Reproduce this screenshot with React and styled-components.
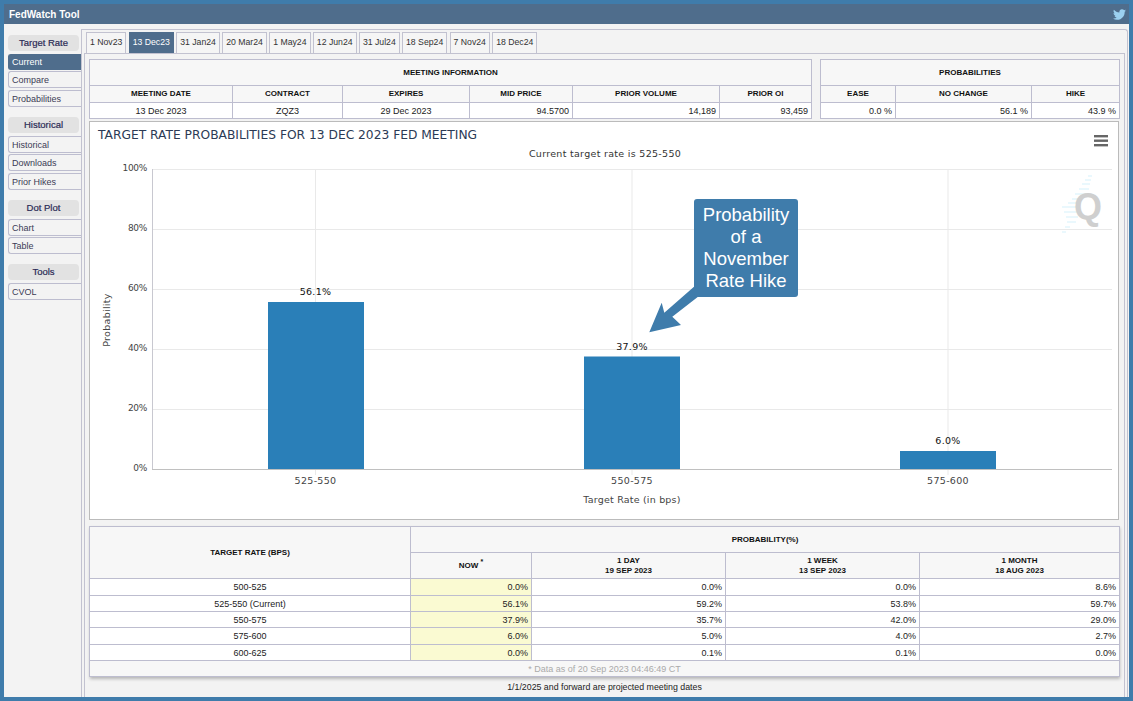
import styled, { createGlobalStyle } from 'styled-components'
import { FaTwitter } from 'react-icons/fa'

const GlobalStyle = createGlobalStyle`
  html, body {
    margin: 0;
    padding: 0;
    height: 100%;
    background: #3f7cab;
    font-family: "Liberation Sans", Arial, sans-serif;
    font-size: 9px;
    color: #222;
  }
`

const Shell = styled.div`
  box-sizing: border-box;
  height: 701px;
  padding: 4px;
`

const Window = styled.div`
  height: 693px;
  display: flex;
  flex-direction: column;
  background: #f3f3f3;
`

const Header = styled.header`
  flex: 0 0 20px;
  display: flex;
  align-items: center;
  justify-content: space-between;
  padding: 0 3px 0 5px;
  background: #4f6d8c;
  color: #fff;
  font-size: 10px;
  font-weight: bold;
  svg {
    color: #9bd0f0;
    font-size: 13px;
  }
`

const Body = styled.div`
  flex: 1;
  display: flex;
  padding-top: 5px;
  min-height: 0;
`

const Sidebar = styled.nav`
  flex: 0 0 76px;
  padding: 6px 0 0 4px;
  box-sizing: border-box;
  position: relative;
  z-index: 1;
`

const SideHeading = styled.div`
  width: 71px;
  height: 16px;
  margin: ${(p) => (p.$first ? '0' : '10px')} 0 3px;
  line-height: 15px;
  text-align: center;
  background: #e2e2e2;
  border-radius: 4px;
  font-size: 9.5px;
  -webkit-text-stroke: 0.2px #2a2a55;
  color: #2a2a55;
`

const SideItem = styled.div`
  box-sizing: border-box;
  width: 73px;
  height: ${(p) => (p.$active ? '16px' : '17px')};
  margin-bottom: ${(p) => (p.$active ? '1px' : '1.5px')};
  padding: ${(p) => (p.$active ? '1px' : '2px')} 0 0 3px;
  line-height: 13px;
  border-radius: 3px 0 0 3px;
  background: ${(p) => (p.$active ? '#4f6d8c' : '#f3f3f3')};
  color: ${(p) => (p.$active ? '#fff' : '#3b3b55')};
  border: 1px solid ${(p) => (p.$active ? '#4f6d8c' : '#bdbdcf')};
  border-right: 0;
`

const Frame = styled.div`
  flex: 1;
  display: flex;
  flex-direction: column;
  margin-right: 1px;
  min-width: 0;
  padding: 2px 2px 0;
  border: 1px solid #c2c2d0;
  border-bottom: 0;
  border-radius: 0 3px 0 0;
`

const Tabs = styled.div`
  flex: 0 0 21px;
  display: flex;
  gap: 2.3px;
  padding-left: 2px;
`

const Tab = styled.div`
  box-sizing: border-box;
  height: 21px;
  padding: 0 3px;
  line-height: 19px;
  font-size: 8.7px;
  white-space: nowrap;
  border: 1px solid ${(p) => (p.$active ? '#4f6d8c' : '#c2c2d0')};
  border-bottom: 0;
  background: ${(p) => (p.$active ? '#4f6d8c' : '#f5f5f5')};
  color: ${(p) => (p.$active ? '#fff' : '#333')};
`

const Panel = styled.div`
  flex: 1;
  box-sizing: border-box;
  display: flex;
  flex-direction: column;
  padding: 5px 0 0 4px;
  border: 1px solid #c2c2d0;
  border-bottom: 0;
`

const TopRow = styled.div`
  display: flex;
  justify-content: space-between;
  width: 1031px;
`

const Table = styled.table`
  table-layout: fixed;
  border-collapse: collapse;
  width: ${(p) => p.$w}px;
  background: #fff;
  font-size: 9px;
`

const Col = styled.col`
  width: ${(p) => p.$w}px;
`

const Th = styled.th`
  height: ${(p) => p.$h || 15}px;
  padding: 0 2px;
  border: 1px solid #bdbdcf;
  background: #f7f7f7;
  color: #111;
  font-size: 8px;
  font-weight: bold;
  line-height: 10px;
  text-align: center;
`

const Td = styled.td`
  height: ${(p) => p.$h || 15}px;
  padding: 0 3px;
  border: 1px solid #bdbdcf;
  background: ${(p) => (p.$now ? '#fafad2' : '#fff')};
  color: #222;
  line-height: 10px;
  text-align: ${(p) => (p.$center ? 'center' : 'right')};
`

const Foot = styled.td`
  height: 15px;
  padding: 0;
  border: 1px solid #bdbdcf;
  background: #f7f7f7;
  color: #aaa;
  text-align: center;
`

const ChartPanel = styled.div`
  position: relative;
  box-sizing: border-box;
  width: 1030px;
  height: 399px;
  margin-top: 2px;
  background: #fff;
  border: 1px solid #bbb;
`

const ChartSvg = styled.svg`
  display: block;
  font-family: "DejaVu Sans", sans-serif;
`

const Callout = styled.div`
  position: absolute;
  left: 604px;
  top: 77px;
  box-sizing: border-box;
  width: 104px;
  height: 98px;
  padding-top: 5px;
  border-radius: 3px;
  background: #3f7cab;
  color: #fff;
  font-size: 18.5px;
  line-height: 22px;
  text-align: center;
`

const RateTableWrap = styled.div`
  margin-top: 6px;
  box-shadow: 1px 2px 3px rgba(0, 0, 0, 0.25);
  width: 1030px;
`

const Note = styled.div`
  margin-top: 4px;
  padding-right: 4px;
  text-align: center;
  font-size: 8.8px;
  line-height: 12px;
  color: #222;
`

const Sup = styled.sup`
  font-size: 7px;
  line-height: 0;
`

const tabs = ['1 Nov23', '13 Dec23', '31 Jan24', '20 Mar24', '1 May24', '12 Jun24', '31 Jul24', '18 Sep24', '7 Nov24', '18 Dec24']

const sideGroups = [
  { title: 'Target Rate', items: ['Current', 'Compare', 'Probabilities'] },
  { title: 'Historical', items: ['Historical', 'Downloads', 'Prior Hikes'] },
  { title: 'Dot Plot', items: ['Chart', 'Table'] },
  { title: 'Tools', items: ['CVOL'] },
]

const rateRows = [
  { h: 16, cells: ['500-525', '0.0%', '0.0%', '0.0%', '8.6%'] },
  { h: 15, cells: ['525-550 (Current)', '56.1%', '59.2%', '53.8%', '59.7%'] },
  { h: 15, cells: ['550-575', '37.9%', '35.7%', '42.0%', '29.0%'] },
  { h: 16, cells: ['575-600', '6.0%', '5.0%', '4.0%', '2.7%'] },
  { h: 15, cells: ['600-625', '0.0%', '0.1%', '0.1%', '0.0%'] },
]

const yTicks = [
  [169, '100%'],
  [229, '80%'],
  [289, '60%'],
  [349, '40%'],
  [409, '20%'],
  [469, '0%'],
]

const bars = [
  { x: 268, top: 302, mid: 315.5, value: '56.1%', label: '525-550' },
  { x: 584, top: 356.5, mid: 632, value: '37.9%', label: '550-575' },
  { x: 900, top: 451, mid: 948, value: '6.0%', label: '575-600' },
]

function Chart() {
  return (
    <ChartSvg width="1028" height="397" viewBox="90 122 1028 397">
      <text x="98" y="139" fontSize="12.25" fill="#2b3a55">TARGET RATE PROBABILITIES FOR 13 DEC 2023 FED MEETING</text>
      <text x="605" y="157" fontSize="9.5" fill="#333" textAnchor="middle" letterSpacing="0.3">Current target rate is 525-550</text>
      <g fill="#666">
        <rect x="1094" y="135" width="14" height="2.4" />
        <rect x="1094" y="139.5" width="14" height="2.4" />
        <rect x="1094" y="144" width="14" height="2.4" />
      </g>
      {yTicks.slice(0, 5).map(([y]) => (
        <line key={y} x1="152" x2="1112" y1={y + 0.5} y2={y + 0.5} stroke="#e9e9e9" />
      ))}
      {bars.map((b) => (
        <line key={b.label} x1={b.mid} x2={b.mid} y1="169" y2="475" stroke="#e9e9e9" />
      ))}
      <g stroke="#d5f1fb" strokeWidth="1">
        <line x1="1088" x2="1092" y1="176" y2="176" />
        <line x1="1085" x2="1091" y1="180" y2="180" />
        <line x1="1082" x2="1090" y1="184" y2="184" />
        <line x1="1079" x2="1089" y1="189" y2="189" />
        <line x1="1075" x2="1086" y1="194" y2="194" />
        <line x1="1072" x2="1082" y1="199" y2="199" />
        <line x1="1068" x2="1078" y1="203" y2="203" />
        <line x1="1062" x2="1078" y1="207" y2="207" />
        <line x1="1064" x2="1078" y1="212" y2="212" />
        <line x1="1066" x2="1078" y1="217" y2="217" />
        <line x1="1067" x2="1076" y1="222" y2="222" />
        <line x1="1065" x2="1070" y1="227" y2="227" />
        <line x1="1062" x2="1066" y1="232" y2="232" />
      </g>
      <text x="1088" y="219" fontSize="36" fontWeight="bold" fontFamily="Liberation Sans, sans-serif" fill="#cfcfcf" textAnchor="middle">Q</text>
      {bars.map((b) => (
        <g key={b.value}>
          <rect x={b.x} y={b.top} width="96" height={469 - b.top} fill="#2a7fb8" />
          <text x={b.mid} y={b.top - 7} fontSize="9.5" fill="#111" textAnchor="middle" letterSpacing="0.3">{b.value}</text>
          <text x={b.mid} y="484" fontSize="9.5" fill="#444" textAnchor="middle" letterSpacing="0.3">{b.label}</text>
        </g>
      ))}
      <line x1="152.5" x2="152.5" y1="169" y2="469" stroke="#c8c8d0" />
      <line x1="152" x2="1112" y1="469.5" y2="469.5" stroke="#c0c0c0" />
      {yTicks.map(([y, t]) => (
        <text key={t} x="147" y={y + 2} fontSize="9" fill="#444" textAnchor="end" letterSpacing="-0.3">{t}</text>
      ))}
      <text x="632" y="503" fontSize="9.5" fill="#444" textAnchor="middle" letterSpacing="0.2">Target Rate (in bps)</text>
      <text transform="translate(110 320) rotate(-90)" fontSize="9.5" fill="#444" textAnchor="middle" letterSpacing="0.3">Probability</text>
      <polygon
        points="649.3,332.3 661.7,302.7 664.3,312.7 696,285 699,296 672.3,316.7 681,325"
        fill="#3f7cab"
      />
    </ChartSvg>
  )
}

export default function App() {
  return (
    <Shell>
      <GlobalStyle />
      <Window>
        <Header>
          FedWatch Tool
          <FaTwitter />
        </Header>
        <Body>
          <Sidebar>
            {sideGroups.map((g, i) => (
              <div key={g.title}>
                <SideHeading $first={i === 0}>{g.title}</SideHeading>
                {g.items.map((item) => (
                  <SideItem key={item} $active={item === 'Current'}>{item}</SideItem>
                ))}
              </div>
            ))}
          </Sidebar>
          <Frame>
            <Tabs>
              {tabs.map((t) => (
                <Tab key={t} $active={t === '13 Dec23'}>{t}</Tab>
              ))}
            </Tabs>
            <Panel>
              <TopRow>
                <Table $w={722}>
                  <colgroup>
                    <Col $w={143} /><Col $w={110} /><Col $w={127} /><Col $w={103} /><Col $w={147} /><Col $w={92} />
                  </colgroup>
                  <thead>
                    <tr><Th colSpan="6" $h={25}>MEETING INFORMATION</Th></tr>
                    <tr>
                      <Th $h={16}>MEETING DATE</Th><Th>CONTRACT</Th><Th>EXPIRES</Th>
                      <Th>MID PRICE</Th><Th>PRIOR VOLUME</Th><Th>PRIOR OI</Th>
                    </tr>
                  </thead>
                  <tbody>
                    <tr>
                      <Td $center>13 Dec 2023</Td><Td $center>ZQZ3</Td><Td $center>29 Dec 2023</Td>
                      <Td>94.5700</Td><Td>14,189</Td><Td>93,459</Td>
                    </tr>
                  </tbody>
                </Table>
                <Table $w={299}>
                  <colgroup>
                    <Col $w={75} /><Col $w={136} /><Col $w={88} />
                  </colgroup>
                  <thead>
                    <tr><Th colSpan="3" $h={25}>PROBABILITIES</Th></tr>
                    <tr><Th $h={16}>EASE</Th><Th>NO CHANGE</Th><Th>HIKE</Th></tr>
                  </thead>
                  <tbody>
                    <tr><Td>0.0 %</Td><Td>56.1 %</Td><Td>43.9 %</Td></tr>
                  </tbody>
                </Table>
              </TopRow>
              <ChartPanel>
                <Chart />
                <Callout>Probability<br />of a<br />November<br />Rate Hike</Callout>
              </ChartPanel>
              <RateTableWrap>
                <Table $w={1030}>
                  <colgroup>
                    <Col $w={321} /><Col $w={121} /><Col $w={194} /><Col $w={194} /><Col $w={200} />
                  </colgroup>
                  <thead>
                    <tr>
                      <Th rowSpan="2">TARGET RATE (BPS)</Th>
                      <Th colSpan="4" $h={25}>PROBABILITY(%)</Th>
                    </tr>
                    <tr>
                      <Th $h={25}>NOW <Sup>*</Sup></Th>
                      <Th>1 DAY<br />19 SEP 2023</Th>
                      <Th>1 WEEK<br />13 SEP 2023</Th>
                      <Th>1 MONTH<br />18 AUG 2023</Th>
                    </tr>
                  </thead>
                  <tbody>
                    {rateRows.map(({ h, cells: [rate, now, day, week, month] }) => (
                      <tr key={rate}>
                        <Td $h={h} $center>{rate}</Td>
                        <Td $h={h} $now>{now}</Td>
                        <Td $h={h}>{day}</Td>
                        <Td $h={h}>{week}</Td>
                        <Td $h={h}>{month}</Td>
                      </tr>
                    ))}
                    <tr>
                      <Foot colSpan="5">* Data as of 20 Sep 2023 04:46:49 CT</Foot>
                    </tr>
                  </tbody>
                </Table>
              </RateTableWrap>
              <Note>1/1/2025 and forward are projected meeting dates</Note>
            </Panel>
          </Frame>
        </Body>
      </Window>
    </Shell>
  )
}
